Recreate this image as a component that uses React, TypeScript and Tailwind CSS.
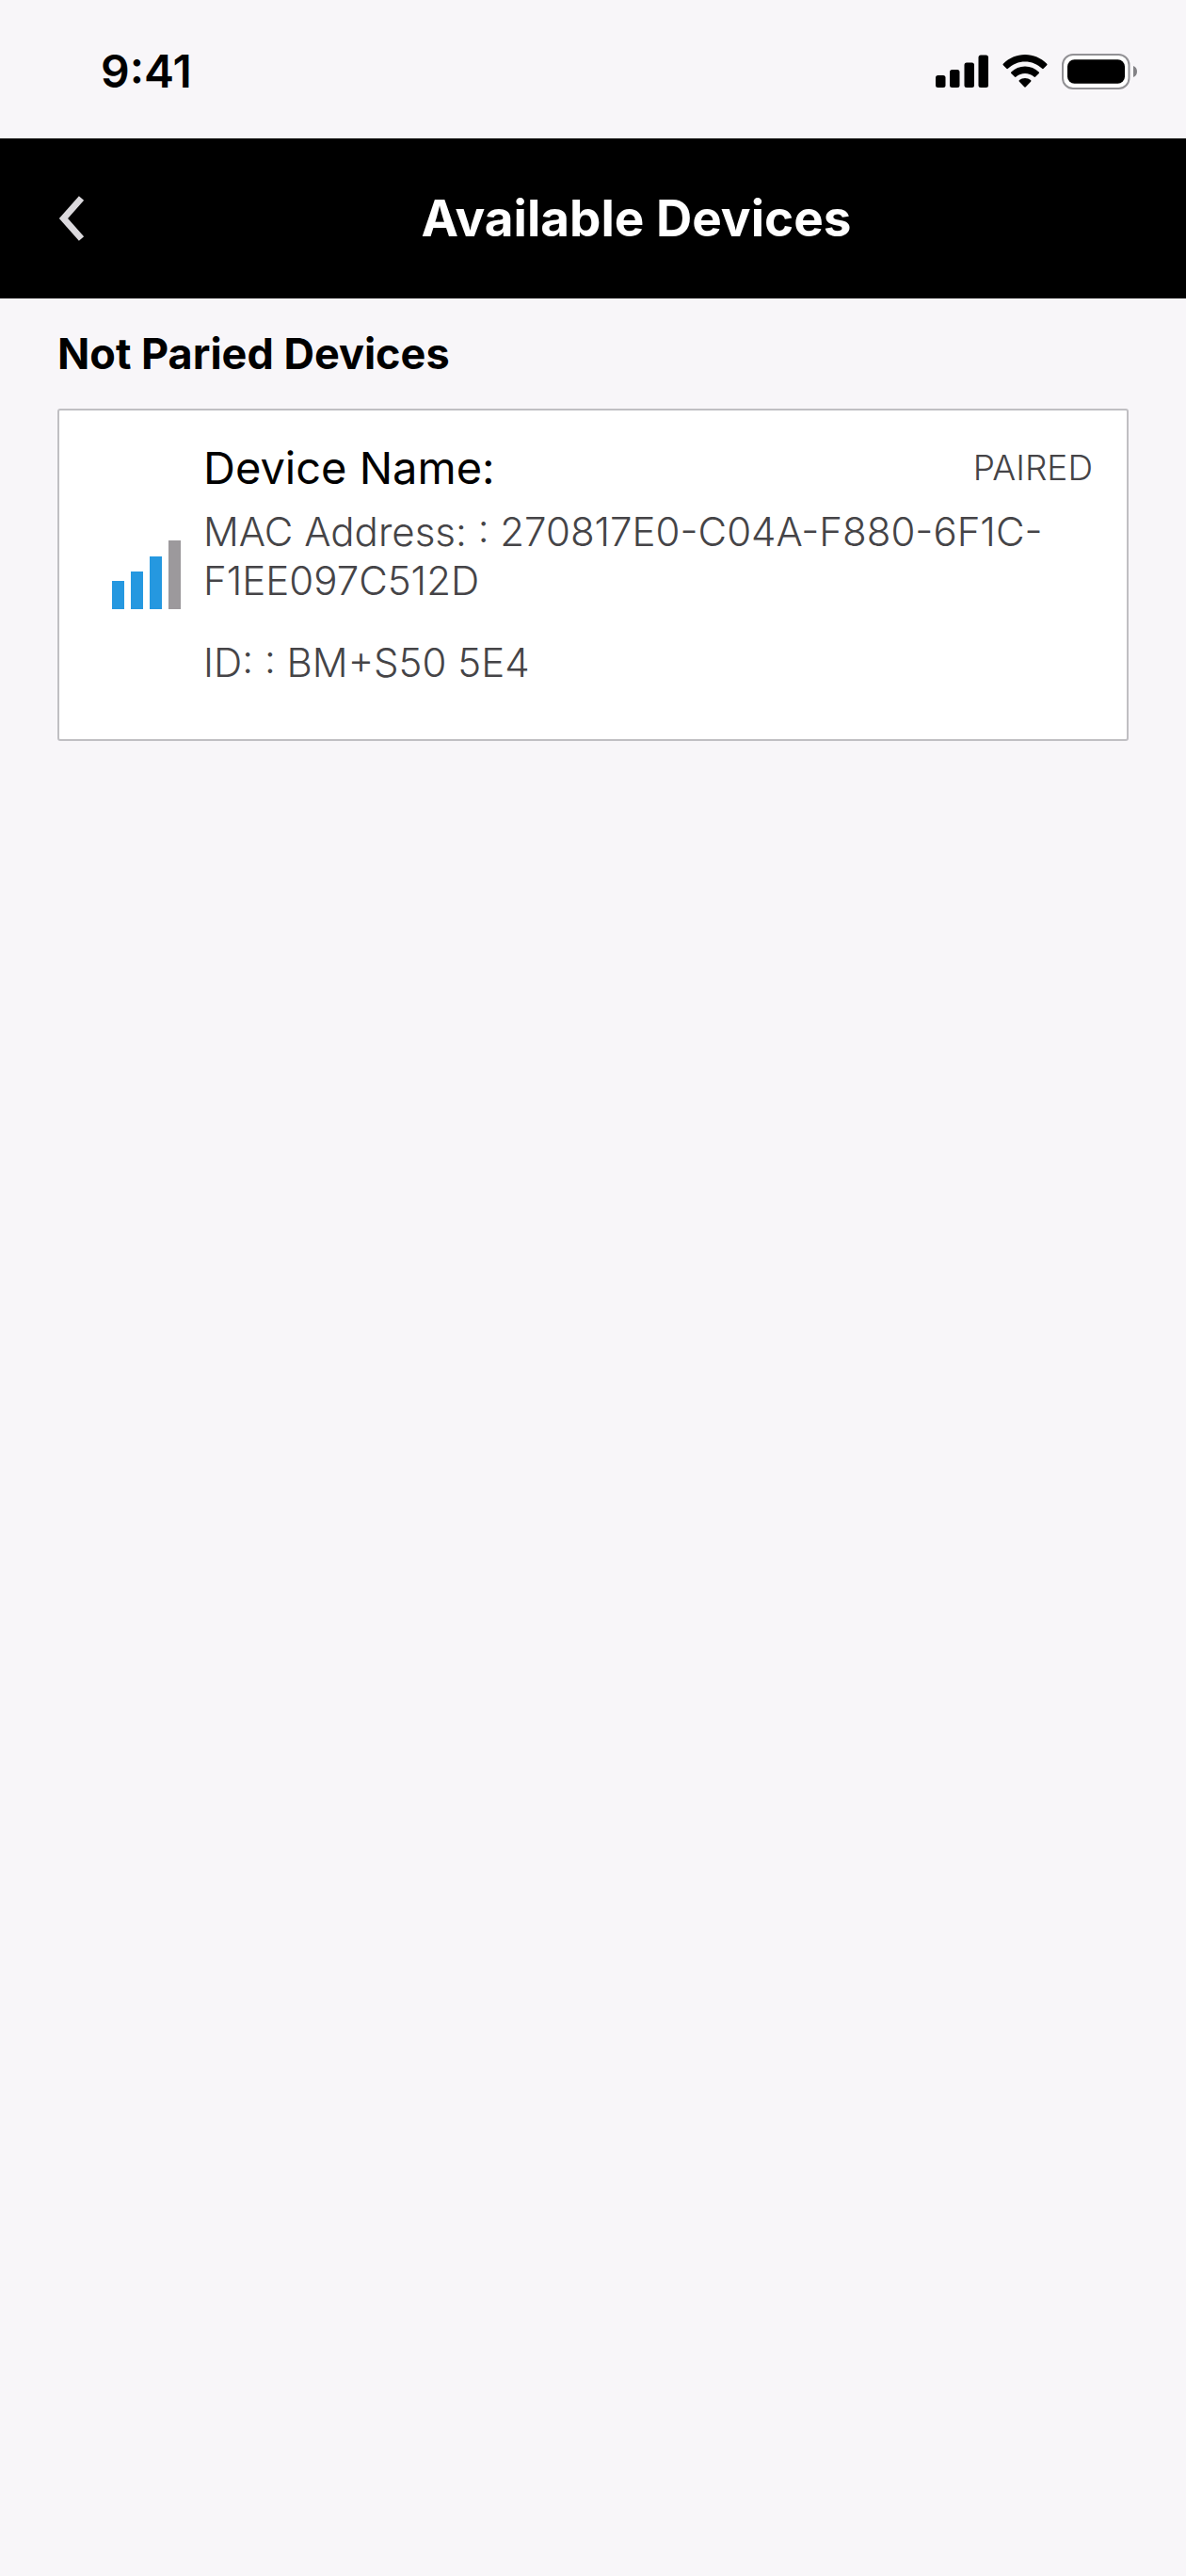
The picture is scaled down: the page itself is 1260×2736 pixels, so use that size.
interface Device {
  name: string;
  status: string;
  mac: string;
  id: string;
  signal: number;
}

const devices: Device[] = [
  {
    name: "",
    status: "PAIRED",
    mac: "270817E0-C04A-F880-6F1C-F1EE097C512D",
    id: "BM+S50 5E4",
    signal: 3
  }
];

const signalBars = [
  { x: 0, height: 30 },
  { x: 20, height: 40 },
  { x: 40, height: 56 },
  { x: 60, height: 73 }
];

function StatusBar() {
  return (
    <div className="flex h-[147px] items-center justify-between pt-1 pl-[107px] pr-[51px]">
      <span className="text-[48px] leading-[56px] font-semibold">9:41</span>
      <div className="flex items-center gap-[15px]">
        {/* Cellular */}
        <svg width="56" height="36" viewBox="0 0 56 36" aria-hidden="true">
          <rect x="0" y="22" width="10.5" height="13" rx="2.5" />
          <rect x="15" y="16" width="10.5" height="19" rx="2.5" />
          <rect x="30.5" y="8.5" width="10.5" height="26.5" rx="2.5" />
          <rect x="45.5" y="0.5" width="10.5" height="34.5" rx="2.5" />
        </svg>
        {/* Wi-Fi */}
        <svg width="48" height="36" viewBox="0 0 48 36" aria-hidden="true">
          <path d="M0.8 9.7C7.1 3.6 15.1 0 24 0s16.9 3.6 23.2 9.7c.5.5.5 1.1 0 1.6l-3.5 3.5c-.5.5-1.1.5-1.6 0C37.2 10.2 30.9 7.5 24 7.5S10.8 10.2 5.9 14.8c-.5.5-1.1.5-1.6 0L.8 11.3c-.5-.5-.5-1.1 0-1.6z" />
          <path d="M9.3 18.4C13.3 14.7 18.4 12.5 24 12.5s10.7 2.2 14.7 5.9c.5.5.5 1.1 0 1.6l-3.6 3.6c-.5.5-1.1.5-1.6 0C30.9 21.3 27.6 20 24 20s-6.9 1.3-9.5 3.6c-.5.5-1.1.5-1.6 0L9.3 20c-.5-.5-.5-1.1 0-1.6z" />
          <path d="M18 27.1c1.7-1.3 3.7-2.1 6-2.1s4.3.8 6 2.1c.6.5.6 1.1.1 1.6l-5.3 5.6c-.5.5-1.1.5-1.6 0l-5.3-5.6c-.5-.5-.5-1.1.1-1.6z" />
        </svg>
        {/* Battery */}
        <svg width="81" height="38" viewBox="0 0 81 38" aria-hidden="true">
          <rect x="1" y="1" width="70.5" height="36" rx="11" fill="#fff" stroke="#929195" strokeWidth="2" />
          <rect x="6" y="6.2" width="61" height="25.6" rx="7.5" />
          <path d="M76 13c2.6 1 4 3.3 4 6s-1.4 5-4 6z" fill="#838286" />
        </svg>
      </div>
    </div>
  );
}

function SignalIcon({ level }: { level: number }) {
  return (
    <svg width="73" height="73" viewBox="0 0 73 73" role="img" aria-label="Signal strength">
      {signalBars.map((bar, index) => (
        <rect
          key={bar.x}
          x={bar.x}
          y={73 - bar.height}
          width="13"
          height={bar.height}
          fill={index < level ? "#2598e0" : "#9c999c"}
        />
      ))}
    </svg>
  );
}

function DeviceCard({ device }: { device: Device }) {
  return (
    <li className="flex rounded-[3px] border-2 border-[#c0bfc3] bg-white pt-[31px] pr-9 pb-[55px] pl-14">
      <div className="flex w-[97px] shrink-0 items-center pt-6">
        <SignalIcon level={device.signal} />
      </div>
      <div className="min-w-0 flex-1">
        <div className="flex items-center justify-between">
          <h3 className="text-[47px] leading-[60px]">{`Device Name:${device.name}`}</h3>
          <span className="text-[37px] leading-[60px] font-light text-[#454447]">{device.status}</span>
        </div>
        <p className="mt-3 text-[42px] leading-[52px] font-light text-[#454447]">
          {`MAC Address: : ${device.mac}`}
        </p>
        <p className="mt-[35px] text-[42px] leading-[52px] font-light text-[#454447]">{`ID: : ${device.id}`}</p>
      </div>
    </li>
  );
}

export default function App() {
  return (
    <div className="min-h-screen bg-[#f8f6f9] font-['Inter',sans-serif] text-black">
      <StatusBar />

      <header className="flex h-[170px] items-center bg-black pl-[62px] text-white">
        <button type="button" aria-label="Back" className="flex h-16 w-[30px] items-center">
          <svg width="28" height="48" viewBox="0 0 28 48" fill="none" stroke="#dbd9dd" strokeWidth="7">
            <path d="M24.5 2.5 L5.5 24 L24.5 45.5" />
          </svg>
        </button>
        <h1 className="flex-1 text-center text-[53px] leading-[64px] font-bold">Available Devices</h1>
      </header>

      <main className="px-[61px] pt-8">
        <h2 className="text-[45px] leading-[54px] font-bold">Not Paried Devices</h2>
        <ul className="mt-[31px] flex flex-col gap-6">
          {devices.map((device) => (
            <DeviceCard key={device.id} device={device} />
          ))}
        </ul>
      </main>
    </div>
  );
}
